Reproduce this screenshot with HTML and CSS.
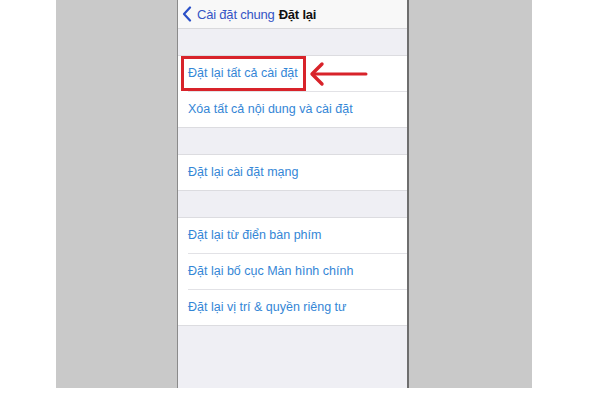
FILE: index.html
```html
<!DOCTYPE html>
<html lang="vi">
<head>
    <meta charset="UTF-8">
    <title>Đặt lại</title>
    <link rel="stylesheet" href="styles.css">
</head>
<body>
    <div class="stage">
        <div class="phone">
            <div class="navbar">
                <svg class="back" width="10" height="16" viewBox="0 0 10 16"><path d="M8 1.5 L2 8 L8 14.5" fill="none" stroke="#2a50c8" stroke-width="2.2" stroke-linecap="round" stroke-linejoin="round"/></svg>
                <span class="back-label">Cài đặt chung</span>
                <span class="title">Đặt lại</span>
            </div>

            <div class="gap"></div>
            <div class="group">
                <div class="row">Đặt lại tất cả cài đặt</div>
                <div class="row">Xóa tất cả nội dung và cài đặt</div>
            </div>

            <div class="gap"></div>
            <div class="group">
                <div class="row">Đặt lại cài đặt mạng</div>
            </div>

            <div class="gap"></div>
            <div class="group">
                <div class="row">Đặt lại từ điển bàn phím</div>
                <div class="row">Đặt lại bố cục Màn hình chính</div>
                <div class="row">Đặt lại vị trí &amp; quyền riêng tư</div>
            </div>

            <!-- annotation -->
            <div class="highlight"></div>
            <svg class="arrow" width="60" height="26" viewBox="0 0 60 26"><path d="M57 13 H5" stroke="#d8232a" stroke-width="3" stroke-linecap="round"/><path d="M13 3 L3 13 L13 23" fill="none" stroke="#d8232a" stroke-width="3.4" stroke-linecap="round" stroke-linejoin="round"/></svg>
        </div>
    </div>
</body>
</html>
```

FILE: styles.css
```css
body { margin: 0; background: #fff; font-family: "Liberation Sans", Arial, sans-serif; }
.stage { margin-left: 56px; width: 476px; height: 388px; background: #c9c9c9; padding-left: 121px; box-sizing: border-box; }
.phone { position: relative; width: 232px; height: 388px; background: #efeff4; border-left: 1px solid #8a8a8a; border-right: 2px solid #6e6e6e; box-sizing: border-box; overflow: hidden; }
.navbar { height: 29px; background: #f8f8f8; border-bottom: 1px solid #d9d9dc; box-sizing: border-box; display: flex; align-items: center; padding-left: 4px; font-size: 13px; letter-spacing: -0.2px; }
.back { margin-right: 5px; }
.back-label { color: #3555c5; margin-right: 4px; }
.title { color: #111; font-weight: bold; }
.gap { height: 26px; }
.group { background: #fff; border-top: 1px solid #dcdce0; border-bottom: 1px solid #dcdce0; }
.row { height: 36px; line-height: 35px; margin-left: 10px; color: #3486d6; font-size: 12.5px; border-bottom: 1px solid #e2e2e6; box-sizing: border-box; }
.row:last-child { height: 35px; border-bottom: none; }
.highlight { position: absolute; left: 3px; top: 56px; width: 125px; height: 35px; border: 3px solid #d8232a; box-sizing: border-box; }
.arrow { position: absolute; left: 131px; top: 61px; }
```
